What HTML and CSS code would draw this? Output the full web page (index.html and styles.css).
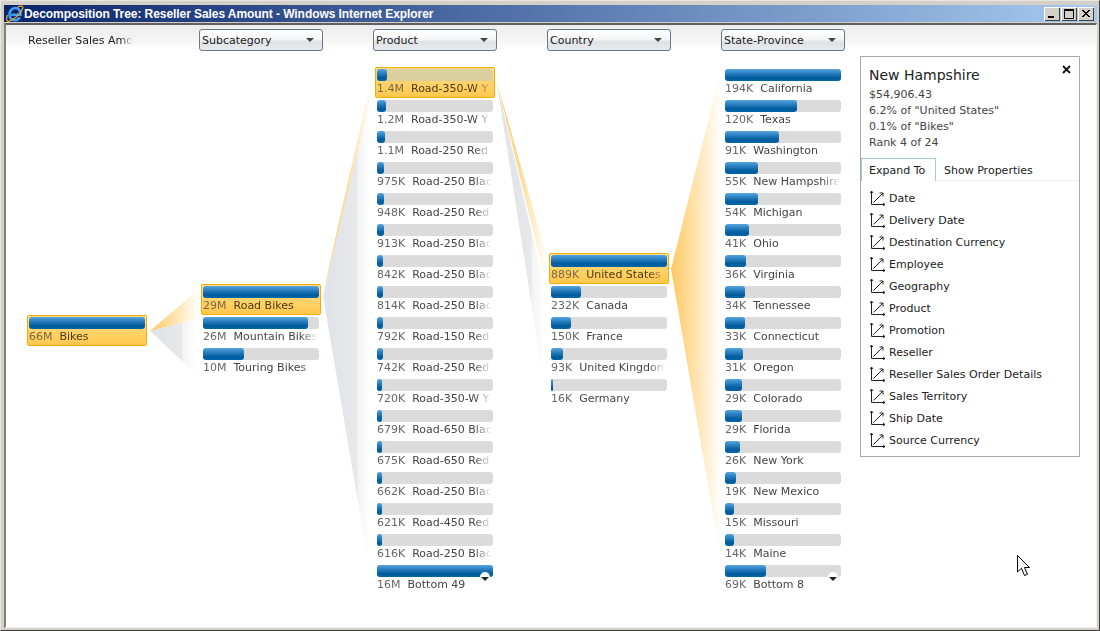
FILE: index.html
```html
<!DOCTYPE html>
<html lang="en">
<head>
<meta charset="utf-8">
<title>Decomposition Tree: Reseller Sales Amount - Windows Internet Explorer</title>
<link rel="stylesheet" href="styles.css">
</head>
<body>
<div class="window">
  <div class="titlebar">
    <svg class="ie-icon" width="18" height="18" viewBox="0 0 18 18">
      <path class="ie-e" d="M5 9.8 H14.5 C14.8 6 12.5 3 9.5 3 C6 3 3.5 6 3.5 9.8 C3.5 13.3 6 15.2 9 15.2 C11 15.2 12.8 14.2 13.8 12.4"/>
      <path class="ie-swoosh" d="M1.5 10 C-0.5 15.5 1 17.5 5 15.5 C10 13 15.5 7 16.8 3 C17.3 1 15 0.5 11.5 2"/>
    </svg>
    <span class="title-text">Decomposition Tree: Reseller Sales Amount - Windows Internet Explorer</span>
    <div class="win-buttons">
      <div class="win-btn"><svg width="16" height="14" viewBox="0 0 16 14"><rect x="4" y="9" width="6" height="2"/></svg></div>
      <div class="win-btn"><svg width="16" height="14" viewBox="0 0 16 14"><path d="M3.5 2.5 H12.5 V11.5 H3.5 Z" class="win-max"/><rect x="3" y="2" width="10" height="2"/></svg></div>
      <div class="win-btn"><svg width="16" height="14" viewBox="0 0 16 14"><path d="M4 3 L11 10 M5 3 L12 10 M11 3 L4 10 M12 3 L5 10" class="win-x"/></svg></div>
    </div>
  </div>
  <div class="content">
    <svg class="links" viewBox="6 25 1089 601" preserveAspectRatio="none">
      <defs>
        <linearGradient id="o1" gradientUnits="userSpaceOnUse" x1="150" y1="0" x2="200" y2="0"><stop offset="0" stop-color="#ffc860"/><stop offset="1" stop-color="#ffffff"/></linearGradient>
        <linearGradient id="g1" gradientUnits="userSpaceOnUse" x1="150" y1="0" x2="196" y2="0"><stop offset="0" stop-color="#dfe2e6"/><stop offset=".68" stop-color="#e6e8eb"/><stop offset=".72" stop-color="#f4f4f4"/><stop offset="1" stop-color="#ffffff"/></linearGradient>
        <linearGradient id="o2" gradientUnits="userSpaceOnUse" x1="323" y1="0" x2="372" y2="0"><stop offset="0" stop-color="#ffc860"/><stop offset=".5" stop-color="#ffdc9c"/><stop offset="1" stop-color="#ffffff"/></linearGradient>
        <linearGradient id="g2" gradientUnits="userSpaceOnUse" x1="323" y1="0" x2="370" y2="0"><stop offset="0" stop-color="#e0e3e7"/><stop offset=".72" stop-color="#e6e8eb"/><stop offset=".76" stop-color="#f4f4f4"/><stop offset="1" stop-color="#ffffff"/></linearGradient>
        <linearGradient id="o3" gradientUnits="userSpaceOnUse" x1="497" y1="0" x2="547" y2="0"><stop offset="0" stop-color="#ffc860"/><stop offset=".5" stop-color="#ffdc9c"/><stop offset="1" stop-color="#ffffff"/></linearGradient>
        <linearGradient id="g3" gradientUnits="userSpaceOnUse" x1="497" y1="0" x2="544" y2="0"><stop offset="0" stop-color="#e0e3e7"/><stop offset=".72" stop-color="#e6e8eb"/><stop offset=".76" stop-color="#f4f4f4"/><stop offset="1" stop-color="#ffffff"/></linearGradient>
        <linearGradient id="o4" gradientUnits="userSpaceOnUse" x1="671" y1="0" x2="721" y2="0"><stop offset="0" stop-color="#ffc860"/><stop offset="1" stop-color="#ffffff"/></linearGradient>
      </defs>
      <polygon fill="url(#g1)" points="150,331 197,319 195,373"/>
      <polygon fill="url(#o1)" points="150,331 200,288 200,318"/>
      <polygon fill="url(#g2)" points="323,296 370,90 368,561"/>
      <polygon fill="url(#o2)" points="323,293 372,75 368,110"/>
      <polygon fill="url(#g3)" points="497,84 544,285 542,372"/>
      <polygon fill="url(#o3)" points="497,82 547,258 546,284"/>
      <polygon fill="url(#o4)" points="671,269 721,70 721,560"/>
    </svg>
    <div class="headers">
      <div class="head"><span class="head-root">Reseller Sales Amo</span></div>
      <div class="head"><div class="drop">Subcategory<i class="drop-arrow"></i></div></div>
      <div class="head"><div class="drop">Product<i class="drop-arrow"></i></div></div>
      <div class="head"><div class="drop">Country<i class="drop-arrow"></i></div></div>
      <div class="head"><div class="drop">State-Province<i class="drop-arrow"></i></div></div>
    </div>
    <div class="tree">
      <div class="col">
        <div class="row sel"><div class="track"><div class="fill" style="width:116px"></div></div><div class="label"><span class="val">66M</span><span class="name">Bikes</span></div></div>
      </div>
      <div class="col">
        <div class="row sel"><div class="track"><div class="fill" style="width:116px"></div></div><div class="label"><span class="val">29M</span><span class="name">Road Bikes</span></div></div>
        <div class="row"><div class="track"><div class="fill" style="width:105px"></div></div><div class="label"><span class="val">26M</span><span class="name">Mountain Bikes</span></div></div>
        <div class="row"><div class="track"><div class="fill" style="width:41px"></div></div><div class="label"><span class="val">10M</span><span class="name">Touring Bikes</span></div></div>
      </div>
      <div class="col">
        <div class="row sel"><div class="track"><div class="fill" style="width:10px"></div></div><div class="label"><span class="val">1.4M</span><span class="name">Road-350-W Y</span></div></div>
        <div class="row"><div class="track"><div class="fill" style="width:9px"></div></div><div class="label"><span class="val">1.2M</span><span class="name">Road-350-W Y</span></div></div>
        <div class="row"><div class="track"><div class="fill" style="width:8px"></div></div><div class="label"><span class="val">1.1M</span><span class="name">Road-250 Red</span></div></div>
        <div class="row"><div class="track"><div class="fill" style="width:7px"></div></div><div class="label"><span class="val">975K</span><span class="name">Road-250 Blac</span></div></div>
        <div class="row"><div class="track"><div class="fill" style="width:7px"></div></div><div class="label"><span class="val">948K</span><span class="name">Road-250 Red</span></div></div>
        <div class="row"><div class="track"><div class="fill" style="width:7px"></div></div><div class="label"><span class="val">913K</span><span class="name">Road-250 Blac</span></div></div>
        <div class="row"><div class="track"><div class="fill" style="width:6px"></div></div><div class="label"><span class="val">842K</span><span class="name">Road-250 Blac</span></div></div>
        <div class="row"><div class="track"><div class="fill" style="width:6px"></div></div><div class="label"><span class="val">814K</span><span class="name">Road-250 Blac</span></div></div>
        <div class="row"><div class="track"><div class="fill" style="width:6px"></div></div><div class="label"><span class="val">792K</span><span class="name">Road-150 Red</span></div></div>
        <div class="row"><div class="track"><div class="fill" style="width:6px"></div></div><div class="label"><span class="val">742K</span><span class="name">Road-250 Red</span></div></div>
        <div class="row"><div class="track"><div class="fill" style="width:5px"></div></div><div class="label"><span class="val">720K</span><span class="name">Road-350-W Y</span></div></div>
        <div class="row"><div class="track"><div class="fill" style="width:5px"></div></div><div class="label"><span class="val">679K</span><span class="name">Road-650 Blac</span></div></div>
        <div class="row"><div class="track"><div class="fill" style="width:5px"></div></div><div class="label"><span class="val">675K</span><span class="name">Road-650 Red</span></div></div>
        <div class="row"><div class="track"><div class="fill" style="width:5px"></div></div><div class="label"><span class="val">662K</span><span class="name">Road-250 Blac</span></div></div>
        <div class="row"><div class="track"><div class="fill" style="width:5px"></div></div><div class="label"><span class="val">621K</span><span class="name">Road-450 Red</span></div></div>
        <div class="row"><div class="track"><div class="fill" style="width:5px"></div></div><div class="label"><span class="val">616K</span><span class="name">Road-250 Blac</span></div></div>
        <div class="row"><div class="track"><div class="fill" style="width:116px"></div><i class="more"></i></div><div class="label"><span class="val">16M</span><span class="name">Bottom 49</span></div></div>
      </div>
      <div class="col">
        <div class="row sel"><div class="track"><div class="fill" style="width:116px"></div></div><div class="label"><span class="val">889K</span><span class="name">United States</span></div></div>
        <div class="row"><div class="track"><div class="fill" style="width:30px"></div></div><div class="label"><span class="val">232K</span><span class="name">Canada</span></div></div>
        <div class="row"><div class="track"><div class="fill" style="width:20px"></div></div><div class="label"><span class="val">150K</span><span class="name">France</span></div></div>
        <div class="row"><div class="track"><div class="fill" style="width:12px"></div></div><div class="label"><span class="val">93K</span><span class="name">United Kingdom</span></div></div>
        <div class="row"><div class="track"><div class="fill" style="width:2px"></div></div><div class="label"><span class="val">16K</span><span class="name">Germany</span></div></div>
      </div>
      <div class="col">
        <div class="row"><div class="track"><div class="fill" style="width:116px"></div></div><div class="label"><span class="val">194K</span><span class="name">California</span></div></div>
        <div class="row"><div class="track"><div class="fill" style="width:72px"></div></div><div class="label"><span class="val">120K</span><span class="name">Texas</span></div></div>
        <div class="row"><div class="track"><div class="fill" style="width:54px"></div></div><div class="label"><span class="val">91K</span><span class="name">Washington</span></div></div>
        <div class="row"><div class="track"><div class="fill" style="width:33px"></div></div><div class="label"><span class="val">55K</span><span class="name">New Hampshire</span></div></div>
        <div class="row"><div class="track"><div class="fill" style="width:33px"></div></div><div class="label"><span class="val">54K</span><span class="name">Michigan</span></div></div>
        <div class="row"><div class="track"><div class="fill" style="width:24px"></div></div><div class="label"><span class="val">41K</span><span class="name">Ohio</span></div></div>
        <div class="row"><div class="track"><div class="fill" style="width:21px"></div></div><div class="label"><span class="val">36K</span><span class="name">Virginia</span></div></div>
        <div class="row"><div class="track"><div class="fill" style="width:20px"></div></div><div class="label"><span class="val">34K</span><span class="name">Tennessee</span></div></div>
        <div class="row"><div class="track"><div class="fill" style="width:20px"></div></div><div class="label"><span class="val">33K</span><span class="name">Connecticut</span></div></div>
        <div class="row"><div class="track"><div class="fill" style="width:18px"></div></div><div class="label"><span class="val">31K</span><span class="name">Oregon</span></div></div>
        <div class="row"><div class="track"><div class="fill" style="width:17px"></div></div><div class="label"><span class="val">29K</span><span class="name">Colorado</span></div></div>
        <div class="row"><div class="track"><div class="fill" style="width:17px"></div></div><div class="label"><span class="val">29K</span><span class="name">Florida</span></div></div>
        <div class="row"><div class="track"><div class="fill" style="width:15px"></div></div><div class="label"><span class="val">26K</span><span class="name">New York</span></div></div>
        <div class="row"><div class="track"><div class="fill" style="width:11px"></div></div><div class="label"><span class="val">19K</span><span class="name">New Mexico</span></div></div>
        <div class="row"><div class="track"><div class="fill" style="width:9px"></div></div><div class="label"><span class="val">15K</span><span class="name">Missouri</span></div></div>
        <div class="row"><div class="track"><div class="fill" style="width:9px"></div></div><div class="label"><span class="val">14K</span><span class="name">Maine</span></div></div>
        <div class="row"><div class="track"><div class="fill" style="width:41px"></div><i class="more"></i></div><div class="label"><span class="val">69K</span><span class="name">Bottom 8</span></div></div>
      </div>
    </div>
    <aside class="panel">
      <svg class="panel-close" width="9" height="9" viewBox="0 0 9 9"><path d="M1 1 L8 8 M8 1 L1 8"/></svg>
      <div class="panel-info">
        <div class="panel-title">New Hampshire</div>
        <div class="panel-line">$54,906.43</div>
        <div class="panel-line">6.2% of "United States"</div>
        <div class="panel-line">0.1% of "Bikes"</div>
        <div class="panel-line">Rank 4 of 24</div>
      </div>
      <div class="tabs">
        <div class="tab active">Expand To</div>
        <div class="tab">Show Properties</div>
      </div>
      <ul class="expand">
        <li><svg class="axis" viewBox="0 0 16 16"><use href="#axis-icon"/></svg>Date</li>
        <li><svg class="axis" viewBox="0 0 16 16"><use href="#axis-icon"/></svg>Delivery Date</li>
        <li><svg class="axis" viewBox="0 0 16 16"><use href="#axis-icon"/></svg>Destination Currency</li>
        <li><svg class="axis" viewBox="0 0 16 16"><use href="#axis-icon"/></svg>Employee</li>
        <li><svg class="axis" viewBox="0 0 16 16"><use href="#axis-icon"/></svg>Geography</li>
        <li><svg class="axis" viewBox="0 0 16 16"><use href="#axis-icon"/></svg>Product</li>
        <li><svg class="axis" viewBox="0 0 16 16"><use href="#axis-icon"/></svg>Promotion</li>
        <li><svg class="axis" viewBox="0 0 16 16"><use href="#axis-icon"/></svg>Reseller</li>
        <li><svg class="axis" viewBox="0 0 16 16"><use href="#axis-icon"/></svg>Reseller Sales Order Details</li>
        <li><svg class="axis" viewBox="0 0 16 16"><use href="#axis-icon"/></svg>Sales Territory</li>
        <li><svg class="axis" viewBox="0 0 16 16"><use href="#axis-icon"/></svg>Ship Date</li>
        <li><svg class="axis" viewBox="0 0 16 16"><use href="#axis-icon"/></svg>Source Currency</li>
      </ul>
    </aside>
    <svg class="cursor" width="14" height="22" viewBox="0 0 14 22"><path d="M0.5 0.5 V17 L4.5 13.2 L7.5 20.5 L10.5 19.3 L7.5 12.5 L12.5 12.5 Z"/></svg>
  </div>
</div>
<svg class="defs-only" width="0" height="0">
  <symbol id="axis-icon" viewBox="0 0 16 16">
    <path d="M1.5 1 V14.5 H14.5 M0 3 L1.5 1 L3 3 M13 13 L15 14.5 L13 16 M3.5 12.5 L13 3 M9.5 3 H13 V6.5" fill="none" stroke="#222" stroke-width="1"/>
  </symbol>
</svg>
</body>
</html>
```
FILE: styles.css
```css
* { box-sizing: border-box; }
html, body { margin: 0; padding: 0; }
body {
  width: 1100px;
  height: 631px;
  overflow: hidden;
  font-family: "DejaVu Sans", Verdana, sans-serif;
  font-size: 11px;
  color: #333;
}
.defs-only { display: block; height: 0; }

.window {
  width: 1100px;
  height: 631px;
  display: flex;
  flex-direction: column;
  padding: 4px 2px 2px 3px;
  background: #d4d0c8;
  border-style: solid;
  border-width: 1px;
  border-color: #e8e6e0 #404040 #404040 #e8e6e0;
}

.titlebar {
  flex: none;
  height: 17px;
  margin-bottom: 1px;
  display: flex;
  align-items: center;
  padding-right: 3px;
  background: linear-gradient(to right, #0a246a, #a6caf0);
  color: #fff;
}
.ie-icon { flex: none; margin-left: 2px; }
.ie-e { fill: none; stroke: #3f9cee; stroke-width: 2.6; }
.ie-swoosh { fill: none; stroke: #f5a623; stroke-width: 1.2; }
.title-text {
  font-family: "Liberation Sans", Arial, sans-serif;
  font-weight: 700;
  font-size: 12px;
  letter-spacing: -0.07px;
  white-space: nowrap;
}
.win-buttons { margin-left: auto; display: flex; }
.win-btn {
  width: 16px;
  height: 14px;
  margin-left: 1px;
  background: #d4d0c8;
  box-shadow: inset 1px 1px 0 #fff, inset -1px -1px 0 #404040;
}
.win-btn svg { display: block; }
.win-btn rect { fill: #000; }
.win-max { fill: none; stroke: #000; }
.win-x { fill: none; stroke: #000; stroke-width: 1; }

.content {
  position: relative;
  flex: 1;
  min-height: 0;
  display: flex;
  flex-direction: column;
  background: #fff;
  border-style: solid;
  border-width: 2px 1px 1px 2px;
  border-color: #606060 #f4f2ec #f4f2ec #808080;
  overflow: hidden;
}
.links {
  position: absolute;
  left: 0;
  top: 0;
  width: 1089px;
  height: 601px;
}
.headers {
  position: relative;
  flex: none;
  height: 26px;
  padding: 4px 0 0 19px;
  display: grid;
  grid-template-columns: repeat(5, 174px);
  align-items: start;
  background: linear-gradient(to bottom, #ececec, #f4f4f4 60%, #ffffff);
  background-size: 100% 24px;
  background-repeat: no-repeat;
}
.head { height: 22px; display: flex; align-items: center; }
.head-root {
  display: block;
  margin-left: 3px;
  width: 105px;
  overflow: hidden;
  white-space: nowrap;
  color: #222;
  -webkit-mask-image: linear-gradient(to right, #000 88%, transparent 100%);
  mask-image: linear-gradient(to right, #000 88%, transparent 100%);
}
.drop {
  position: relative;
  width: 124px;
  height: 22px;
  line-height: 21px;
  padding-left: 2px;
  border: 1px solid #66798c;
  border-radius: 3px;
  color: #222;
  background: linear-gradient(to bottom, #ffffff 0, #f6f7f8 45%, #dfe2e5 60%, #e8eaec 100%);
}
.drop-arrow {
  position: absolute;
  right: 8px;
  top: 8px;
  width: 0;
  height: 0;
  border-left: 4px solid transparent;
  border-right: 4px solid transparent;
  border-top: 4px solid #444;
}

.tree {
  position: relative;
  flex: none;
  height: 559px;
  padding-left: 21px;
  display: grid;
  grid-template-columns: repeat(5, 174px);
  align-items: center;
}
.col { display: flex; flex-direction: column; }
.row {
  width: 120px;
  height: 31px;
  padding: 1px;
  border: 1px solid transparent;
  border-radius: 2px;
}
.row.sel {
  border-color: #f5ab00;
  background: linear-gradient(to bottom, #ffdf8f, #ffc84c);
}
.track {
  position: relative;
  height: 12px;
  border-radius: 3px;
  background: #dbdbdb;
}
.row.sel .track { background: #dccf9e; }
.fill {
  height: 12px;
  border-radius: 3px;
  background: linear-gradient(to bottom, #56a5de 0, #2b80c0 35%, #005a9c 75%, #0068aa 100%);
}
.more {
  position: absolute;
  right: 3px;
  top: 7px;
  width: 10px;
  height: 5px;
  border-radius: 5px 5px 0 0;
  background: #fff;
}
.more::after {
  content: "";
  position: absolute;
  left: 1px;
  top: 5px;
  border-left: 4px solid transparent;
  border-right: 4px solid transparent;
  border-top: 4px solid #222;
}
.label {
  height: 14px;
  line-height: 14px;
  margin-top: 1px;
  display: flex;
  overflow: hidden;
  white-space: nowrap;
  -webkit-mask-image: linear-gradient(to right, #000 84%, transparent 99%);
  mask-image: linear-gradient(to right, #000 84%, transparent 99%);
}
.val { color: #666; margin-right: 7px; }
.name { color: #444; }
.row.sel .val { color: #7b6a45; }
.row.sel .name { color: #4a3a18; }

.panel {
  position: absolute;
  left: 854px;
  top: 31px;
  width: 220px;
  height: 401px;
  background: #fff;
  border: 1px solid #a9a9a9;
}
.panel-close {
  position: absolute;
  right: 8px;
  top: 8px;
  fill: none;
  stroke: #111;
  stroke-width: 1.8;
}
.panel-info { padding: 9px 8px 0; }
.panel-title { font-size: 14px; line-height: 18px; color: #222; margin-bottom: 3px; }
.panel-line { line-height: 16px; color: #444; }
.tabs {
  display: flex;
  height: 23px;
  margin-top: 7px;
  border-bottom: 1px solid #efefef;
}
.tab { line-height: 26px; padding: 0 8px; color: #222; }
.tab.active {
  height: 23px;
  width: 75px;
  line-height: 24px;
  background: #fff;
  border: 1px solid #a8c8de;
  border-bottom: 0;
  padding: 0 7px;
}
.expand { list-style: none; margin: 6px 0 0; padding: 0; }
.expand li {
  height: 22px;
  display: flex;
  align-items: center;
  padding-left: 9px;
  color: #222;
}
.axis { width: 16px; height: 16px; margin-right: 3px; flex: none; }

.cursor {
  position: absolute;
  left: 1011px;
  top: 530px;
  fill: #fff;
  stroke: #000;
  stroke-width: 1;
}
```
